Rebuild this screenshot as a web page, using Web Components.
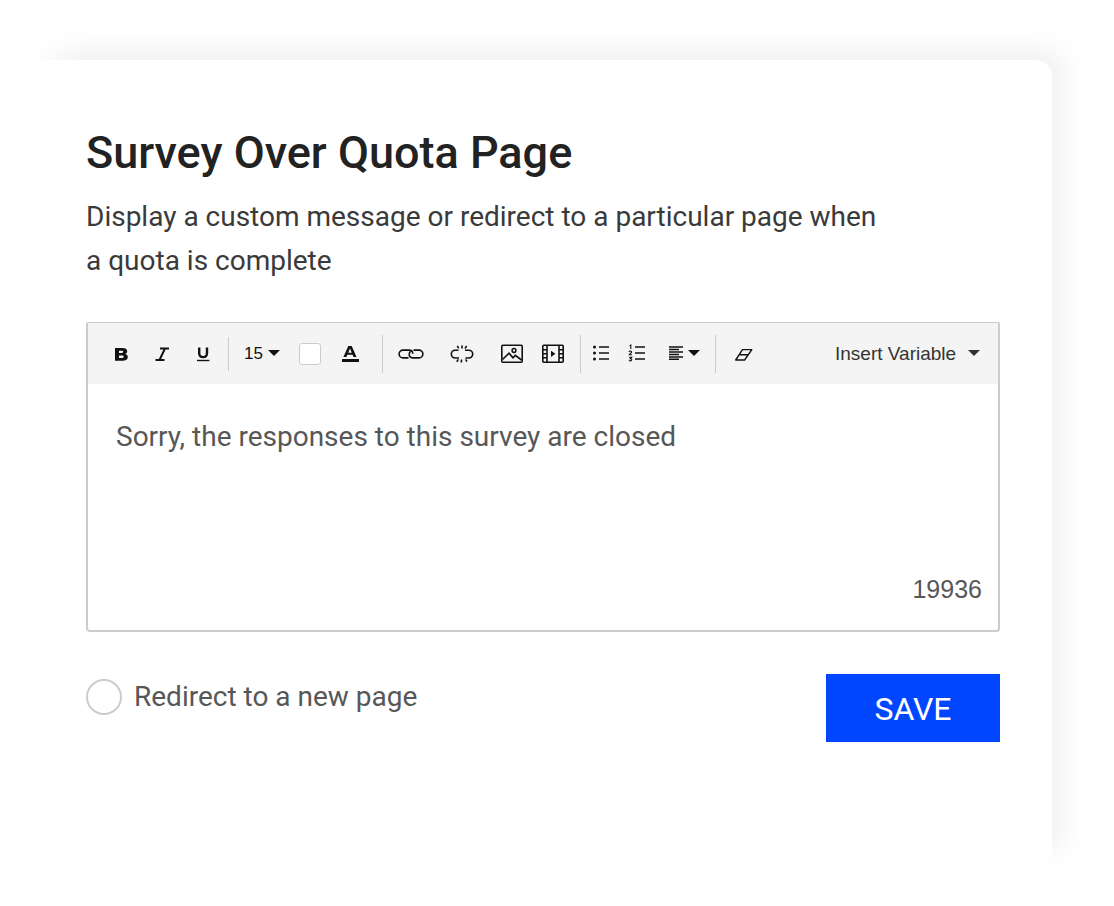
<!DOCTYPE html>
<html lang="en">
<head>
<meta charset="utf-8">
<meta name="viewport" content="width=device-width, initial-scale=1">
<title>Survey Over Quota Page</title>
<style>
    body {
        margin: 0;
        background-color: #fff;
        color: #575757;
        font-family: Roboto, "Liberation Sans", sans-serif;
    }
</style>
</head>
<body>

<survey-card>
    <span slot="title">Survey Over Quota Page</span>
    <span slot="description">Display a custom message or redirect to a particular page when a quota is complete</span>
    <message-editor value="Sorry, the responses to this survey are closed" count="19936"></message-editor>
    <radio-option slot="option">Redirect to a new page</radio-option>
    <save-button slot="action">SAVE</save-button>
</survey-card>

<script>
;(function(){
    'use strict';

    const ICONS = {
        bold: '<svg width="20" height="20" viewBox="0 0 20 20"><path fill="currentColor" fill-rule="evenodd" d="M4 4h7.500c3 0 4.700 1.200 4.700 3.300 0 1.400-.8 2.300-2 2.700 1.700.4 2.600 1.400 2.600 3 0 2.500-1.900 3.800-5.100 3.800H4zM8 6.700v2.200h2.700c1 0 1.500-.4 1.500-1.100s-.5-1.100-1.500-1.100zM8 11.600V14h3.100c1 0 1.600-.4 1.600-1.200s-.6-1.200-1.600-1.200z"/></svg>',
        italic: '<svg width="20" height="20" viewBox="0 0 20 20"><path fill="none" stroke="currentColor" stroke-width="2" d="M8 4.500h9M3.500 16h9M13 4.500L7.500 16"/></svg>',
        underline: '<svg width="20" height="20" viewBox="0 0 20 20"><path fill="none" stroke="currentColor" stroke-width="2.400" d="M6.200 3.500v5.700c0 2.600 1.300 3.900 3.900 3.900s3.900-1.300 3.900-3.900V3.500"/><path stroke="currentColor" stroke-width="1.400" d="M4 16.500h12.400"/></svg>',
        color: '<svg width="20" height="20" viewBox="0 0 20 20"><path fill="currentColor" fill-rule="evenodd" d="M8.300 2h3.400l4.800 11h-3l-.9-2.200H7.300L6.400 13h-3zM10 4.500L8.200 8.700h3.600z"/><path fill="currentColor" d="M2 15h17v3H2z"/></svg>',
        link: '<svg width="26" height="20" viewBox="0 0 26 20"><g fill="none" stroke="currentColor" stroke-width="1.600"><path d="M10.500 13.900H5a3.900 3.900 0 0 1 0-7.800h5.700c2.800 0 4.100 1.800 4.100 3.600"/><path d="M15.500 6.100H21a3.900 3.900 0 0 1 0 7.800h-5.700c-2.800 0-4.100-1.800-4.100-3.600 0-1.300.5-2.200 1.400-2.900"/></g></svg>',
        unlink: '<svg width="26" height="20" viewBox="0 0 26 20"><g fill="none" stroke="currentColor" stroke-width="1.600"><path d="M9.500 6.200H6.200a3.900 3.900 0 0 0 0 7.800H10M16 6.200h3.800a3.900 3.900 0 0 1 0 7.800h-3.300"/><path d="M13 1.400v3.200M8.300 1.900l1.400 2.500M17.700 1.900l-1.700 2.600M12.400 15.400v3.200M16.600 15.300l1.400 2.300M9.300 15.400l-1.500 2.300"/></g></svg>',
        image: '<svg width="24" height="20" viewBox="0 0 24 20"><rect x="1.800" y="1.200" width="20.400" height="17" rx="1" fill="none" stroke="currentColor" stroke-width="1.600"/><circle cx="14" cy="6.500" r="1.900" fill="none" stroke="currentColor" stroke-width="1.500"/><path fill="none" stroke="currentColor" stroke-width="1.600" d="M2.500 15.500L9 9.200l4 4.600 2.300-2.400 6.200 4.600"/></svg>',
        video: '<svg width="24" height="20" viewBox="0 0 24 20"><g fill="none" stroke="currentColor" stroke-width="1.600"><rect x="1.800" y="1.200" width="20.400" height="17" rx="1"/><path d="M6 1.500v16.500M18 1.500v16.500M2 5.800h4M2 9.800h4M2 13.800h4M18 5.800h4M18 9.800h4M18 13.800h4"/></g><path fill="currentColor" d="M10 6.700v6.200l4.400-3.100z"/></svg>',
        bullets: '<svg width="18" height="20" viewBox="0 0 18 20"><g fill="currentColor"><circle cx="2.500" cy="3" r="1.500"/><circle cx="2.500" cy="9" r="1.500"/><circle cx="2.500" cy="15" r="1.500"/></g><path stroke="currentColor" stroke-width="1.500" d="M7 3h10M7 9h10M7 15h10"/></svg>',
        numbers: '<svg width="18" height="20" viewBox="0 0 18 20"><path fill="none" stroke="currentColor" stroke-width="1.100" d="M1.500 1.900l1.300-.8v4M1.100 8c.2-1.300 2.700-1.200 2.500.1C3.500 9 1.300 9.700 1.200 10.700h2.700M1.100 13.200h2.600l-1.400 1.400c2.200 0 1.700 2.300.1 2.300-.7 0-1.200-.3-1.400-.7"/><path stroke="currentColor" stroke-width="1.500" d="M7 3h10M7 9h10M7 15h10"/></svg>',
        eraser: '<svg width="20" height="20" viewBox="0 0 20 20"><path fill="none" stroke="currentColor" stroke-width="1.400" stroke-linejoin="round" d="M8.500 5.600h9.300l-7.200 10.400H1.700zM5.200 10.800h8.600"/></svg>'
    };

    const ALIGN_ICON = '<svg width="16" height="14" viewBox="0 0 16 14"><path stroke="currentColor" stroke-width="1.500" d="M1 1h14M1 3.500h10M1 6h14M1 8.500h10M1 11h14M1 13.300h10"/></svg>';

    class SurveyCard extends HTMLElement {

        constructor(){
            super();
            this.attachShadow({ mode: 'open' }).innerHTML = `
                <style>
                    :host {
                        display: block;
                        box-sizing: border-box;
                        margin: 60px 62px 38px 34px;
                        padding: 67px 52px 126px;
                        border-radius: 16px;
                        background-color: #fff;
                        box-shadow: 16px -14px 28px -4px rgba(0, 0, 0, .06);
                    }
                    h1 {
                        margin: 0;
                        color: #222;
                        font-size: 45px;
                        font-weight: 500;
                        line-height: 52px;
                    }
                    p {
                        max-width: 800px;
                        margin: 16px 0 39px;
                        color: #3a3a3a;
                        font-size: 28px;
                        line-height: 44px;
                    }
                    footer {
                        display: flex;
                        align-items: flex-start;
                        justify-content: space-between;
                        margin-top: 42px;
                    }
                </style>
                <h1><slot name="title"></slot></h1>
                <p><slot name="description"></slot></p>
                <slot></slot>
                <footer>
                    <slot name="option"></slot>
                    <slot name="action"></slot>
                </footer>
            `;
        }

    }

    class ToolButton extends HTMLElement {

        connectedCallback(){
            if(this.shadowRoot) return;
            this.attachShadow({ mode: 'open' }).innerHTML = `
                <style>
                    :host {
                        display: block;
                    }
                    button {
                        display: block;
                        padding: 0;
                        border: 0;
                        background: none;
                        color: #111;
                        cursor: pointer;
                    }
                    svg {
                        display: block;
                    }
                </style>
                <button type="button" aria-label="${this.getAttribute('label')}">${ICONS[this.getAttribute('icon')]}</button>
            `;
        }

    }

    // native select with its arrow laid in the same grid cell
    class ToolSelect extends HTMLElement {

        connectedCallback(){
            if(this.shadowRoot) return;
            const options = this.getAttribute('options').split('|');
            const isAlign = this.hasAttribute('align-icon');
            this.attachShadow({ mode: 'open' }).innerHTML = `
                <style>
                    :host {
                        display: grid;
                        align-items: center;
                        color: #111;
                        font-family: "Liberation Sans", Arial, sans-serif;
                        font-size: var(--select-size, 17px);
                    }
                    select, .face {
                        grid-area: 1 / 1;
                    }
                    select {
                        width: 100%;
                        padding: 0;
                        border: 0;
                        appearance: none;
                        background: none;
                        color: inherit;
                        font: inherit;
                        line-height: 24px;
                        cursor: pointer;
                    }
                    .face {
                        display: flex;
                        align-items: center;
                        justify-content: space-between;
                        padding-bottom: 2px;
                        pointer-events: none;
                    }
                    .caret {
                        margin-left: auto;
                    }
                    :host([align-icon]) select {
                        opacity: 0;
                    }
                </style>
                <select aria-label="${this.getAttribute('label')}">
                    ${options.map(o => `<option>${o}</option>`).join('')}
                </select>
                <span class="face">
                    ${isAlign ? ALIGN_ICON : ''}
                    <svg class="caret" width="12" height="6" viewBox="0 0 12 6"><path fill="currentColor" d="M0 0h12L6 6z"/></svg>
                </span>
            `;
        }

    }

    class EditorToolbar extends HTMLElement {

        constructor(){
            super();
            this.attachShadow({ mode: 'open' }).innerHTML = `
                <style>
                    :host {
                        display: flex;
                        align-items: center;
                        height: 61px;
                        padding: 0 18px 0 8px;
                        background-color: #f4f4f4;
                    }
                    .group {
                        display: flex;
                        align-items: center;
                        height: 38px;
                        gap: 21px;
                        padding: 0 15px;
                        border-right: 1px solid #ccc;
                    }
                    .text {
                        height: 34px;
                    }
                    .font {
                        gap: 19px;
                        padding-right: 22px;
                    }
                    .insert {
                        gap: 25px;
                    }
                    .media {
                        display: flex;
                        gap: 17px;
                    }
                    .lists {
                        gap: 18px;
                        padding-left: 11px;
                    }
                    .clear {
                        padding-left: 18px;
                        border-right: 0;
                    }
                    .size {
                        width: 36px;
                    }
                    .align {
                        width: 32px;
                        margin-left: 4px;
                    }
                    .variable {
                        width: 145px;
                        margin-left: auto;
                        color: #333;
                        --select-size: 19px;
                    }
                    .swatch {
                        box-sizing: border-box;
                        width: 22px;
                        height: 22px;
                        padding: 0;
                        border: 1px solid #ccc;
                        border-radius: 3px;
                        background-color: #fff;
                    }
                </style>
                <div class="group text">
                    <tool-button icon="bold" label="Bold"></tool-button>
                    <tool-button icon="italic" label="Italic"></tool-button>
                    <tool-button icon="underline" label="Underline"></tool-button>
                </div>
                <div class="group font">
                    <tool-select class="size" label="Font size" options="15|18|24"></tool-select>
                    <button class="swatch" type="button" aria-label="Background color"></button>
                    <tool-button icon="color" label="Text color"></tool-button>
                </div>
                <div class="group insert">
                    <tool-button icon="link" label="Insert link"></tool-button>
                    <tool-button icon="unlink" label="Remove link"></tool-button>
                    <div class="media">
                        <tool-button icon="image" label="Insert image"></tool-button>
                        <tool-button icon="video" label="Insert video"></tool-button>
                    </div>
                </div>
                <div class="group lists">
                    <tool-button icon="bullets" label="Bulleted list"></tool-button>
                    <tool-button icon="numbers" label="Numbered list"></tool-button>
                    <tool-select class="align" align-icon label="Alignment" options="Left|Center|Right"></tool-select>
                </div>
                <div class="group clear">
                    <tool-button icon="eraser" label="Clear formatting"></tool-button>
                </div>
                <tool-select class="variable" label="Insert Variable" options="Insert Variable|Survey name"></tool-select>
            `;
        }

    }

    class MessageEditor extends HTMLElement {

        connectedCallback(){
            if(this.shadowRoot) return;
            this.attachShadow({ mode: 'open' }).innerHTML = `
                <style>
                    :host {
                        display: block;
                        border: 2px solid #ccc;
                        border-top-width: 1px;
                        border-radius: 2px 2px 4px 4px;
                    }
                    textarea {
                        display: block;
                        box-sizing: border-box;
                        width: 100%;
                        height: 180px;
                        padding: 33px 28px 0;
                        border: 0;
                        outline: 0;
                        resize: none;
                        background: none;
                        color: #575757;
                        font: inherit;
                        font-size: 28px;
                        line-height: 40px;
                    }
                    output {
                        display: block;
                        padding: 10px 16px 26px;
                        font-family: "Liberation Sans", Arial, sans-serif;
                        font-size: 25px;
                        line-height: 30px;
                        text-align: right;
                    }
                </style>
                <editor-toolbar></editor-toolbar>
                <textarea aria-label="Message">${this.getAttribute('value')}</textarea>
                <output>${this.getAttribute('count')}</output>
            `;
        }

    }

    class RadioOption extends HTMLElement {

        constructor(){
            super();
            this.attachShadow({ mode: 'open' }).innerHTML = `
                <style>
                    :host {
                        display: block;
                    }
                    label {
                        display: flex;
                        align-items: center;
                        gap: 12px;
                        padding-top: 4px;
                        font-size: 28px;
                        line-height: 38px;
                    }
                    input {
                        box-sizing: border-box;
                        width: 36px;
                        height: 36px;
                        margin: 0;
                        border: 2px solid #ccc;
                        border-radius: 50%;
                        appearance: none;
                        background-color: #fff;
                    }
                    input:checked {
                        border: 10px solid #0046ff;
                    }
                </style>
                <label><input type="radio" name="redirect"><slot></slot></label>
            `;
        }

    }

    class SaveButton extends HTMLElement {

        constructor(){
            super();
            this.attachShadow({ mode: 'open' }).innerHTML = `
                <style>
                    :host {
                        display: block;
                    }
                    button {
                        display: block;
                        min-width: 174px;
                        padding: 15px 40px 13px;
                        border: 0;
                        background-color: #0046ff;
                        color: #fff;
                        font: inherit;
                        font-size: 32px;
                        line-height: 40px;
                        cursor: pointer;
                    }
                </style>
                <button type="button"><slot></slot></button>
            `;
        }

    }

    customElements.define('tool-button', ToolButton);
    customElements.define('tool-select', ToolSelect);
    customElements.define('editor-toolbar', EditorToolbar);
    customElements.define('message-editor', MessageEditor);
    customElements.define('radio-option', RadioOption);
    customElements.define('save-button', SaveButton);
    customElements.define('survey-card', SurveyCard);

})();
</script>
</body>
</html>
